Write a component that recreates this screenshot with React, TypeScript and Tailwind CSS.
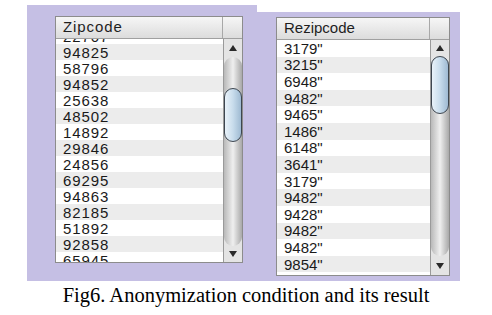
const zipcodes = [
  "22707",
  "94825",
  "58796",
  "94852",
  "25638",
  "48502",
  "14892",
  "29846",
  "24856",
  "69295",
  "94863",
  "82185",
  "51892",
  "92858",
  "65945",
];

const rezipcodes = [
  "3179\"",
  "3215\"",
  "6948\"",
  "9482\"",
  "9465\"",
  "1486\"",
  "6148\"",
  "3641\"",
  "3179\"",
  "9482\"",
  "9428\"",
  "9482\"",
  "9482\"",
  "9854\"",
];

function Arrow({ down }: { down?: boolean }) {
  return (
    <svg width="8" height="6" viewBox="0 0 8 6">
      <polygon points={down ? "0,0 8,0 4,6" : "4,0 8,6 0,6"} fill="#2a2a2a" />
    </svg>
  );
}

function Scrollbar({
  upH,
  downH,
  thumbTop,
  thumbH,
}: {
  upH: number;
  downH: number;
  thumbTop: number;
  thumbH: number;
}) {
  return (
    <div className="flex w-[19px] flex-col border-l border-[#9a9a9a] bg-[#e4e4e4]">
      <div className="flex items-center justify-center" style={{ height: upH }}>
        <Arrow />
      </div>
      <div className="relative flex-1 rounded-[9px] bg-gradient-to-r from-[#b9b9b9] via-[#efefef] to-[#a9a9a9]">
        <div
          className="absolute left-0 right-0 rounded-[9px] border border-[#3d4650] bg-gradient-to-r from-[#e9f2f9] via-[#c8dcec] to-[#9fbad2]"
          style={{ top: thumbTop, height: thumbH }}
        />
      </div>
      <div className="flex items-center justify-center" style={{ height: downH }}>
        <Arrow down />
      </div>
    </div>
  );
}

function Table({
  title,
  rows,
  rowH,
  offset,
  firstGrey,
  tracking,
  bar,
}: {
  title: string;
  rows: string[];
  rowH: string;
  offset: string;
  firstGrey: boolean;
  tracking: string;
  bar: { upH: number; downH: number; thumbTop: number; thumbH: number };
}) {
  return (
    <div className="flex h-full w-full flex-col border border-[#8c8c8c] bg-white">
      <div className="flex h-[22px] border-b border-[#a0a0a0] bg-gradient-to-b from-[#f6f6f6] to-[#dcdcdc]">
        <div className="flex flex-1 items-center border-r border-[#a8a8a8] pl-[7px] text-[15px] text-[#1e1e1e]">
          <span className={tracking}>{title}</span>
        </div>
        <div className="w-[19px]" />
      </div>
      <div className="flex min-h-0 flex-1">
        <div className="flex-1 overflow-hidden">
          <div className={offset}>
            {rows.map((r, i) => (
              <div
                key={i}
                className={`flex items-center pl-[7px] text-[15px] leading-none text-[#1a1a1a] ${rowH} ${
                  (i % 2 === 0) === firstGrey ? "bg-[#ececec]" : "bg-white"
                }`}
              >
                <span className={tracking}>{r}</span>
              </div>
            ))}
          </div>
        </div>
        <Scrollbar {...bar} />
      </div>
    </div>
  );
}

export default function App() {
  return (
    <div
      className="h-[315px] w-[492px] overflow-hidden bg-white"
      style={{ fontFamily: '"Liberation Sans", Arial, sans-serif' }}
    >
      <div className="flex items-start pl-[27px]">
        {/* left capture */}
        <div className="mt-[5px] h-[276px] w-[230px] bg-[#c5bfe4] pl-[28px] pt-[11px]">
          <div className="h-[247px] w-[188px]">
            <Table
              title="Zipcode"
              rows={zipcodes}
              rowH="h-[16px]"
              offset="-mt-[11px]"
              firstGrey={false}
              tracking="tracking-[0.9px]"
              bar={{ upH: 18, downH: 16, thumbTop: 31, thumbH: 54 }}
            />
          </div>
        </div>
        {/* right capture */}
        <div className="mt-[12px] h-[269px] w-[203px] bg-[#c5bfe4] pl-[19px] pt-[5px]">
          <div className="h-[259px] w-[174px]">
            <Table
              title="Rezipcode"
              rows={rezipcodes}
              rowH="h-[16.6px]"
              offset="mt-0"
              firstGrey={false}
              tracking="tracking-normal"
              bar={{ upH: 16, downH: 19, thumbTop: 0, thumbH: 58 }}
            />
          </div>
        </div>
      </div>
      <div
        className="mt-[2px] text-center text-[20.5px] leading-[24px] text-black"
        style={{ fontFamily: '"Liberation Serif", "Times New Roman", serif' }}
      >
        Fig6. Anonymization condition and its result
      </div>
    </div>
  );
}
